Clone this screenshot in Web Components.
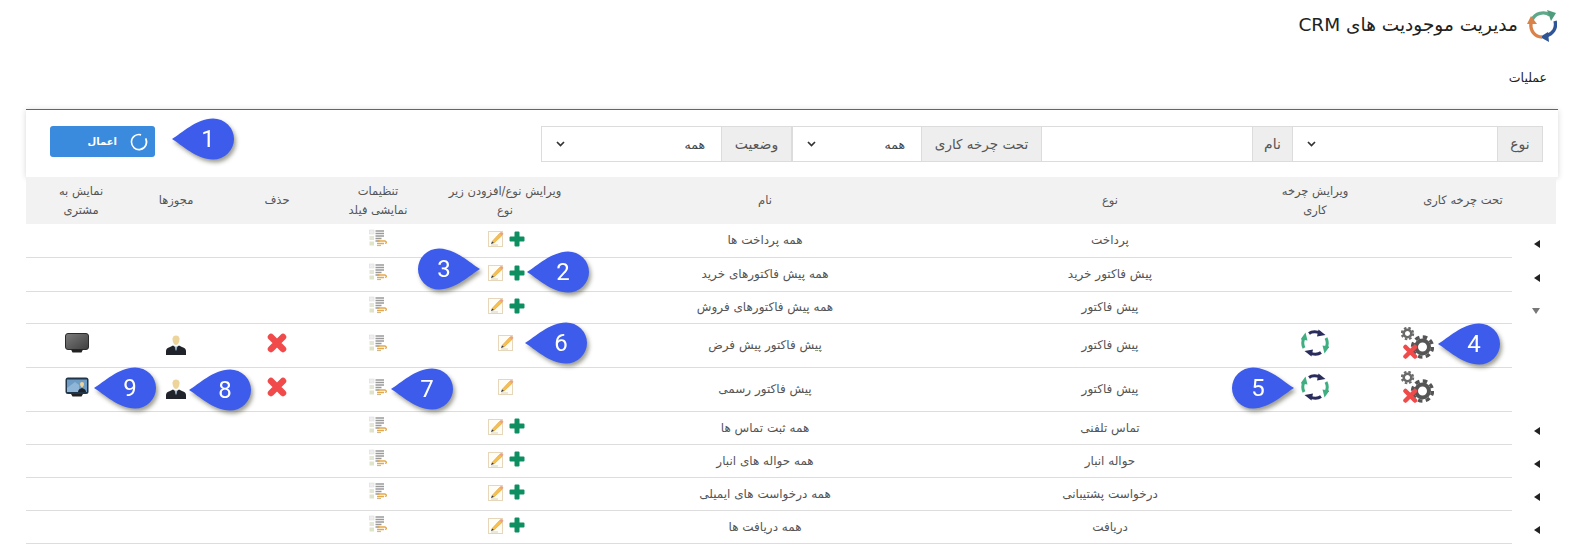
<!DOCTYPE html>
<html lang="fa" dir="rtl">
<head>
<meta charset="utf-8">
<title>CRM</title>
<style>
html,body{margin:0;padding:0;background:#fff;height:547px;overflow:hidden}
body{font-family:"DejaVu Sans",Roboto,sans-serif}
</style>
</head>
<body>
<crm-page></crm-page>
<script>
const FONT = '"DejaVu Sans","Liberation Sans",sans-serif';
const ICONS = {
  logo:`<svg width="30" height="33" viewBox="0 0 30 33" fill="none">
    <path d="M5 11C8 4 17 2 23 6" stroke="#5fa98a" stroke-width="3.4"/><path d="M20 1l9 3-5 8z" fill="#4f9d7c"/>
    <path d="M28 12c2 7-2 13-9 15" stroke="#2f5597" stroke-width="3.4"/><path d="M22 33l-9-5 8-5z" fill="#2f5597"/>
    <path d="M15 28C8 28 3 22 4 14" stroke="#d9824a" stroke-width="3.4"/><path d="M0 15l4-8 6 8z" fill="#d9824a"/></svg>`,
  edit:`<svg width="16" height="17" viewBox="0 0 16 17"><rect x=".5" y="1.5" width="14" height="15" fill="#fffdf6" stroke="#e6d6ba"/>
    <path d="M4 11.500L11.500 3.500l2.500 2L6 13z" fill="#f6c04e" stroke="#dc9426" stroke-width=".5"/><path d="M11.500 3.500l1.500-1.800L15.500 3.800 14 5.500z" fill="#e9a08a"/><path d="M4 11.500l2 1.500-3 1z" fill="#333"/><path d="M3 15h7" stroke="#d8d2bc"/></svg>`,
  plus:`<svg width="16" height="16" viewBox="0 0 16 16"><path d="M5.500 1.500Q5.500.500 6.500.500h3q1 0 1 1V5.500h4q1 0 1 1v3q0 1-1 1h-4v4q0 1-1 1h-3q-1 0-1-1v-4h-4q-1 0-1-1v-3q0-1 1-1h4z" fill="#0e8f62"/></svg>`,
  fields:`<svg width="18" height="18" viewBox="0 0 18 18"><rect x="0.500" y="1" width="4.500" height="4" fill="#eee" stroke="#ddd" stroke-width=".6"/><rect x="0.500" y="7" width="4.500" height="4" fill="#e4e7d8"/><rect x="0.500" y="12.500" width="4.500" height="4" fill="#dde4c8"/>
    <path d="M6.500 2h8.500M6.500 4.500h8.500M6.500 7h8.500M6.500 9.500h6M6.500 12h4" stroke="#9a9a9a" stroke-width="1.300"/><path d="M8 14.500h7M8 12h8l2 1.500-2 1" stroke="#e3a94a" stroke-width="1.300" fill="none"/><path d="M8 16.500h4" stroke="#cbb98f" stroke-width="1.200"/></svg>`,
  cross:`<svg width="20" height="20" viewBox="0 0 20 20"><path d="M4 4L16 16M16 4L4 16" stroke="#f04a4a" stroke-width="6.500" stroke-linecap="round"/></svg>`,
  user:`<svg width="20" height="20" viewBox="0 0 20 20"><path d="M6.500 3.500Q7 .5 10 .5t3.500 3c.2 3-1.500 6.500-3.500 6.500S6.300 6.500 6.500 3.500z" fill="#ecd49a"/><path d="M0 20v-4q0-3 4-4l3-1.500 3 2 3-2 3 1.500q4 1 4 4v4z" fill="#20242a"/><path d="M8.500 10.500l1.500 1.500 1.500-1.500-1 5h-1z" fill="#9fb2cf"/></svg>`,
  screen:`<svg width="24" height="20" viewBox="0 0 24 20"><defs><linearGradient id="g" x1="0" y1="0" x2="1" y2="1"><stop offset="0" stop-color="#7c7c7c"/><stop offset="1" stop-color="#3f3f3f"/></linearGradient></defs><rect x=".5" y=".5" width="23" height="16" rx="2.500" fill="url(#g)" stroke="#2b2b2b"/><path d="M6 16.500h12l-1.500 3h-9z" fill="#222"/></svg>`,
  screenUser:`<svg width="24" height="20" viewBox="0 0 24 20"><rect x=".5" y=".5" width="23" height="16.500" rx="2.500" fill="#20344a"/><rect x="2" y="2.500" width="20" height="12.500" fill="#6f9cc4"/><path d="M2 11l8-6 4 3v7H2z" fill="#8fb6d6"/><path d="M15 7q0-2 2-2t2 2-2 3.500S15 9 15 7z" fill="#ecd49a"/><path d="M13 15q0-3 4-4 4 1 4 4z" fill="#1d2229"/><path d="M6 17h12l-1.500 2.500h-9z" fill="#222"/></svg>`,
  cycle:`<svg width="28" height="28" viewBox="0 0 28 28" fill="none">
    <path d="M8 4.500C11 2.300 16 2.300 19 4.300" stroke="#2a2d5c" stroke-width="3"/><path d="M17.500 .5l7 5.500-8.500 1.500z" fill="#2a2d5c"/>
    <path d="M20 23.500C17 25.700 12 25.700 9 23.700" stroke="#2a2d5c" stroke-width="3"/><path d="M10.500 27.500l-7-5.500 8.500-1.500z" fill="#2a2d5c"/>
    <path d="M3 19C1.500 16 1.500 12 3 9" stroke="#3fae80" stroke-width="3"/><path d="M-.5 10.500L4.500 3.500 6.500 11.500z" fill="#3fae80"/>
    <path d="M25 9c1.500 3 1.500 7 0 10" stroke="#3fae80" stroke-width="3"/><path d="M28.500 17.500L23.500 24.500 21.500 16.500z" fill="#3fae80"/></svg>`,
  gears:`<svg width="33" height="32" viewBox="0 0 33 32" fill="none">
    <g transform="translate(6.500 6.500)"><circle r="3.800" stroke="#6a6a6a" stroke-width="2.600"/><circle r="5.700" stroke="#6a6a6a" stroke-width="2" stroke-dasharray="2.500 2"/></g>
    <g transform="translate(21.500 20)"><circle r="6.500" stroke="#555" stroke-width="4"/><circle r="10" stroke="#555" stroke-width="3.400" stroke-dasharray="4.500 3.350"/></g>
    <path d="M4.500 20L14 29.500M14 20L4.500 29.500" stroke="#f04a4a" stroke-width="4.500" stroke-linecap="round"/></svg>`,
  chevron:`<svg width="9" height="6" viewBox="0 0 9 6" fill="none"><path d="M1 1l3.500 3.500L8 1" stroke="#333" stroke-width="1.700"/></svg>`,
  spinner:`<svg width="18" height="18" viewBox="0 0 18 18" fill="none"><path d="M6 2.200A7.500 7.500 0 1 0 12 2.200" stroke="#fff" stroke-width="1.600" transform="rotate(40 9 9)"/><path d="M9 1.500A7.500 7.500 0 0 1 15.500 5.200" stroke="#fff" stroke-width="1.600" opacity=".6" transform="rotate(60 9 9)"/></svg>`
};

function def(name, css, html, init){
  customElements.define(name, class extends HTMLElement{
    constructor(){
      super();
      const r=this.attachShadow({mode:'open'});
      r.innerHTML=`<style>${css}</style>${typeof html==='function'?html(this):html}`;
      if(init) init(this,r);
    }
  });
}

def('crm-icon', `:host{display:inline-flex;line-height:0;vertical-align:middle}`, el=>ICONS[el.getAttribute('name')]||'');

def('crm-callout', `
  :host{position:absolute;display:block;width:64px;height:44px;filter:drop-shadow(2px 3px 2px rgba(40,40,20,.45))}
  svg{position:absolute;inset:0}
  :host([flip]) svg{transform:scaleX(-1)}
  span{position:absolute;top:0;height:44px;width:30px;left:21px;text-align:center;direction:ltr;
       font:24px/44px Roboto,"Liberation Sans",sans-serif;color:#fff}
  :host([flip]) span{left:13px}`,
  `<svg width="64" height="44" viewBox="0 0 64 44"><path d="M0 22C10 16 24 2 41 1.500A21 20.500 0 1 1 41 42.500C24 42 10 28 0 22Z" fill="#3d5ceb"/></svg><span><slot></slot></span>`);

def('crm-title', `
  :host{display:flex;align-items:center;gap:9px;height:50px;padding:0 21px 0 0;box-sizing:border-box;font:18.500px ${FONT};color:#222}
  span{position:relative;top:-1px}`,
  `<crm-icon name="logo"></crm-icon><span><slot></slot></span>`);

def('crm-section', `
  :host{display:block;height:59px;box-sizing:border-box;padding:18px 31px 0 0;font:12.500px/20px ${FONT};color:#222}`,
  `<slot></slot>`);

def('crm-addon', `
  :host{display:flex;align-items:center;justify-content:center;box-sizing:border-box;height:36px;background:#eee;border:1px solid #dcdcdc;font:14px ${FONT};color:#555;white-space:nowrap}`,
  `<slot></slot>`);

def('crm-select', `
  :host{display:flex;align-items:center;justify-content:space-between;box-sizing:border-box;height:36px;background:#fff;border:1px solid #dcdcdc;border-width:1px 0;padding:0 16px 0 14px;font:12.500px ${FONT};color:#444}
  span{min-width:1px}`,
  `<span><slot></slot></span>${ICONS.chevron}`);

def('crm-textbox', `
  :host{display:block;box-sizing:border-box;height:36px;background:#fff;border:1px solid #dcdcdc;border-width:1px 0}`,
  ``);

def('crm-button', `
  :host{display:flex;align-items:center;justify-content:flex-start;gap:13px;box-sizing:border-box;width:105px;height:31px;padding:0 7px 0 0;background:#3a8ade;border-radius:3px;color:#fff;font:bold 10px ${FONT}}`,
  `${ICONS.spinner}<span><slot></slot></span>`);

def('crm-filter', `
  :host{display:flex;align-items:flex-start;justify-content:space-between;box-sizing:border-box;height:68px;margin:0 20px 0 26px;padding:16px 15px 0 24px;
        border-top:1px solid #4a6a9c;box-shadow:0 1px 6px rgba(0,0,0,.16);background:#fff}
  .group{display:flex;width:1002px}
  .group>*{flex:none}
  `,
  `<div class="group">
    <crm-addon style="width:46px">نوع</crm-addon>
    <crm-select style="width:204px"></crm-select>
    <crm-addon style="width:41px">نام</crm-addon>
    <crm-textbox style="width:210px"></crm-textbox>
    <crm-addon style="width:121px;font-size:13.500px">تحت چرخه کاری</crm-addon>
    <crm-select style="width:129px;border-left:1px solid #dcdcdc">همه</crm-select>
    <crm-addon style="width:71px">وضعیت</crm-addon>
    <crm-select style="width:180px;border-left:1px solid #dcdcdc">همه</crm-select>
  </div>
  <crm-button>اعمال</crm-button>`);

const ic=n=>`<crm-icon name="${n}"></crm-icon>`;
const ROWS=[
 {a:'l',t:'پرداخت',n:'همه پرداخت ها',h:33,add:1},
 {a:'l',t:'پیش فاکتور خرید',n:'همه پیش فاکتورهای خرید',h:34,add:1},
 {a:'d',t:'پیش فاکتور',n:'همه پیش فاکتورهای فروش',h:32,add:1},
 {t:'پیش فاکتور',n:'پیش فاکتور پیش فرض',h:44,full:1,screen:'screen'},
 {t:'پیش فاکتور',n:'پیش فاکتور رسمی',h:44,full:1,screen:'screenUser'},
 {a:'l',t:'تماس تلفنی',n:'همه ثبت تماس ها',h:33,add:1},
 {a:'l',t:'حواله انبار',n:'همه حواله های انبار',h:33,add:1},
 {a:'l',t:'درخواست پشتیبانی',n:'همه درخواست های ایمیلی',h:33,add:1},
 {a:'l',t:'دریافت',n:'همه دریافت ها',h:33,add:1}
];
const WIDTHS=[44,142,110,300,390,130,124,78,124,88];

def('crm-table', `
  :host{display:block;margin:0 22px 0 26px}
  table{border-collapse:collapse;table-layout:fixed;width:1530px;font:12px ${FONT};color:#555}
  th{background:#f2f2f2;height:47px;padding:0;font-weight:400;font-size:11.500px;line-height:19px;color:#555;text-align:center;white-space:nowrap}
  td{padding:0;text-align:center;border-bottom:1px solid #ddd;white-space:nowrap;box-sizing:border-box}
  th.sh{padding-left:22px}
  td.sh{padding-left:14px}
  td.ar{text-align:right;padding:6px 16px 0 0;border-bottom:0}
  td.gr{padding-right:48px}
  .l{display:inline-block;border:4px solid transparent;border-left:0;border-right:6px solid #222;width:0;height:0;vertical-align:middle}
  .d{display:inline-block;border:4px solid transparent;border-top:6px solid #777;border-bottom:0;width:0;height:0;vertical-align:middle}
  td.ic{padding-bottom:4px}
  td.fl{padding-bottom:5px}
  td.ed{padding:0 0 6px 2px}
  td.ed.add{padding-bottom:3px}
  td.ed crm-icon+crm-icon{margin-right:5px}
  `,
  `<table><colgroup>${WIDTHS.map(w=>`<col style="width:${w}px">`).join('')}</colgroup>
  <thead><tr>
    <th colspan="2">تحت چرخه کاری</th>
    <th>ویرایش چرخه<br>کاری</th>
    <th>نوع</th>
    <th>نام</th>
    <th>ویرایش نوع/افزودن زیر<br>نوع</th>
    <th>تنظیمات<br>نمایشی فیلد</th>
    <th>حذف</th>
    <th>مجوزها</th>
    <th class="sh">نمایش به<br>مشتری</th>
  </tr></thead>
  <tbody>${ROWS.map(r=>`<tr style="height:${r.h}px">
    <td class="ar">${r.a?`<i class="${r.a}"></i>`:''}</td>
    <td class="gr ic">${r.full?ic('gears'):''}</td>
    <td class="ic">${r.full?ic('cycle'):''}</td>
    <td>${r.t}</td>
    <td>${r.n}</td>
    <td class="ed ${r.add?'add':''}">${r.add?ic('plus'):''}${ic('edit')}</td>
    <td class="fl">${ic('fields')}</td>
    <td class="ic">${r.full?ic('cross'):''}</td>
    <td>${r.full?ic('user'):''}</td>
    <td class="sh ic">${r.full?ic(r.screen):''}</td>
  </tr>`).join('')}</tbody></table>`);

def('crm-page', `
  :host{display:block;position:relative;width:1578px;height:547px;overflow:hidden;direction:rtl;background:#fff}
  `,
  `<crm-title>مدیریت موجودیت های CRM</crm-title>
   <crm-section>عملیات</crm-section>
   <crm-filter></crm-filter>
   <crm-table></crm-table>
   <crm-callout style="left:172px;top:117px">1</crm-callout>
   <crm-callout style="left:527px;top:250px">2</crm-callout>
   <crm-callout flip style="left:416px;top:247px">3</crm-callout>
   <crm-callout style="left:1438px;top:322px">4</crm-callout>
   <crm-callout flip style="left:1230px;top:366px">5</crm-callout>
   <crm-callout style="left:525px;top:321px">6</crm-callout>
   <crm-callout style="left:391px;top:367px">7</crm-callout>
   <crm-callout style="left:189px;top:368px">8</crm-callout>
   <crm-callout style="left:94px;top:366px">9</crm-callout>`);
</script>
</body>
</html>
